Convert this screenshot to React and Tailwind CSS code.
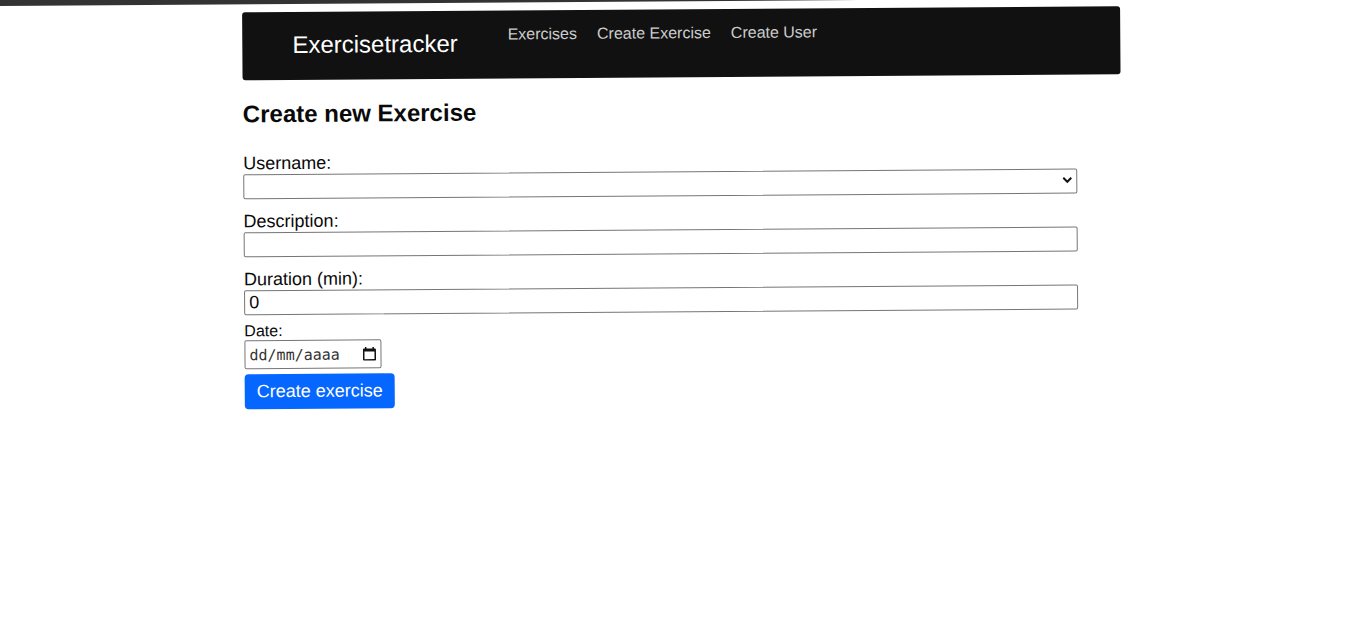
const links = ["Exercises", "Create Exercise", "Create User"];

function Field({ id, label, children }) {
  return (
    <div className="flex flex-col">
      <label htmlFor={id} className="text-[18px] leading-[21px]">
        {label}
      </label>
      {children}
    </div>
  );
}

function Chevron() {
  return (
    <svg
      viewBox="0 0 10 7"
      className="pointer-events-none absolute top-[8px] right-[5px] h-[7px] w-[10px]"
      fill="none"
      stroke="#111"
      strokeWidth="2"
      aria-hidden="true"
    >
      <path d="M1 1.2 L5 5.2 L9 1.2" />
    </svg>
  );
}

function CalendarIcon() {
  return (
    <svg viewBox="0 0 14 15" className="h-[15px] w-[14px]" aria-hidden="true">
      <path
        fill="#111"
        fillRule="evenodd"
        d="M2.5 0.5h1.5v1.5h6V0.5h1.5v1.5H12.5a1 1 0 0 1 1 1v10a1 1 0 0 1-1 1h-11a1 1 0 0 1-1-1v-10a1 1 0 0 1 1-1h1zM2 5v7.7h10V5z"
      />
    </svg>
  );
}

export default function App() {
  const box =
    "block h-[25px] w-full appearance-none rounded-[2px] border border-[#767676] bg-white px-1 text-[18px] leading-[21px] outline-none";
  return (
    <div className="min-h-screen overflow-hidden bg-white font-['Liberation_Sans',Arial,sans-serif] text-[#0a0a0a]">
      <div className="origin-top-left rotate-[-0.4deg]">
        <div className="h-[6px] bg-[#333]" />
        <div className="pr-1">
          <div className="mx-auto mt-2 w-[878px] max-w-full">
            <nav className="flex h-[68px] items-start rounded-[3px] bg-[#111] pt-[14px] pl-[50px]">
              <a href="#home" className="mt-[5px] text-[24px] leading-[28px] text-white">
                Exercisetracker
              </a>
              <ul className="ml-[50px] flex gap-5 text-[16px] leading-[20px] text-[#ccc]">
                {links.map((text) => (
                  <li key={text}>
                    <a href="#page">{text}</a>
                  </li>
                ))}
              </ul>
            </nav>
            <h1 className="mt-5 text-[24px] leading-[28px] font-bold">Create new Exercise</h1>
            <form className="mt-[25px] w-[95%]">
              <div className="flex flex-col gap-3">
                <Field id="username" label="Username:">
                  <div className="relative">
                    <select id="username" className={box} />
                    <Chevron />
                  </div>
                </Field>
                <Field id="description" label="Description:">
                  <input id="description" type="text" className={box} />
                </Field>
                <Field id="duration" label="Duration (min):">
                  <input id="duration" type="text" defaultValue="0" className={box} />
                </Field>
              </div>
              <label htmlFor="date" className="block pt-[6px] text-[16px] leading-[19px]">
                Date:
              </label>
              <div className="flex h-[29px] w-[137px] items-center rounded-[2px] border border-[#767676] px-1">
                <input
                  id="date"
                  type="text"
                  placeholder="dd/mm/aaaa"
                  className="w-full min-w-0 font-['DejaVu_Sans_Mono',monospace] text-[15px] leading-[20px] outline-none placeholder:text-[#333]"
                />
                <button type="button" aria-label="Open calendar">
                  <CalendarIcon />
                </button>
              </div>
              <button
                type="submit"
                className="mt-[5px] block h-[35px] rounded-[4px] bg-[#0567ff] px-3 text-[18px] leading-[21px] text-white"
              >
                Create exercise
              </button>
            </form>
          </div>
        </div>
      </div>
    </div>
  );
}
